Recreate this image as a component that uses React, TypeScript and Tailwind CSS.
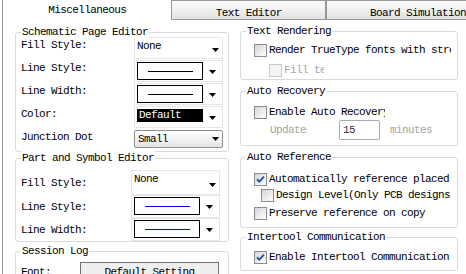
import React from 'react';

const Arrow = () => (
  <svg width="7" height="4" viewBox="0 0 7 4">
    <polygon points="0,0 7,0 3.5,4" fill="#000" />
  </svg>
);

const Check = () => (
  <svg width="11" height="11" viewBox="0 0 11 11">
    <path d="M2 5.2 L4.3 7.6 L9 2.6" fill="none" stroke="#2a52be" strokeWidth="2" />
  </svg>
);

function Group({ title, className, children }: { title: string; className?: string; children?: React.ReactNode }) {
  return (
    <div className={`relative border border-[#d3dbe3] rounded-[3px] ${className ?? ''}`}>
      <span className="absolute left-[5px] top-[-8px] bg-white px-[1px] leading-[14px] whitespace-nowrap">{title}</span>
      {children}
    </div>
  );
}

function CheckRow({ label, checked, disabled, className }: { label: string; checked?: boolean; disabled?: boolean; className?: string }) {
  return (
    <div className={`flex items-center h-[16px] gap-[2px] overflow-hidden whitespace-nowrap ${className ?? ''}`}>
      <div
        className={`w-[13px] h-[13px] shrink-0 border flex items-center justify-center ${
          disabled ? 'border-[#c9c9c9] bg-[#f4f4f4]' : 'border-[#8c8c8c] bg-linear-to-br from-[#d6d6d6] to-white'
        }`}
      >
        {checked && <Check />}
      </div>
      <span className={disabled ? 'text-[#a3a3a3]' : ''}>{label}</span>
    </div>
  );
}

function LinePreview({ color }: { color: string }) {
  return (
    <div className="ml-[2px] my-[1px] w-[66px] h-[18px] border border-black bg-white flex items-center justify-center">
      <div className={`w-[45px] h-px ${color}`} />
    </div>
  );
}

export default function App() {
  return (
    <div className="w-[466px] h-[274px] overflow-hidden bg-white flex flex-col text-[11px] tracking-[-0.6px] text-black font-['Liberation_Mono',monospace]">
      {/* tabs */}
      <div className="flex h-[20px] shrink-0">
        <div className="ml-[2px] w-[172px] h-[20px] border-l border-r border-[#919b9c] bg-white text-center pt-[4px] leading-[12px]">
          Miscellaneous
        </div>
        <div className="w-[155px] h-[20px] border-t border-b border-r border-[#919b9c] bg-linear-to-b from-[#fdfdfd] to-[#e2e2e2] text-center pt-[6px] leading-[12px]">
          Text Editor
        </div>
        <div className="flex-1 h-[20px] border-t border-b border-l border-[#919b9c] bg-linear-to-b from-[#fdfdfd] to-[#e2e2e2] pt-[6px] pl-[43px] leading-[12px] whitespace-nowrap">
          Board Simulation
        </div>
      </div>

      {/* body */}
      <div className="flex-1 flex ml-[2px] border-l border-[#919b9c] overflow-hidden">
        {/* left column */}
        <div className="ml-[12px] w-[214px] pt-[12px] flex flex-col shrink-0">
          <Group title="Schematic Page Editor" className="h-[124px] pt-[3px] pl-[5px]">
            <div className="flex items-start h-[23px]">
              <span className="w-[113px] pt-[3px] leading-[12px]">Fill Style:</span>
              <div className="mt-[1px] w-[89px] h-[22px] border border-[#e6e6e6] flex">
                <span className="flex-1 pl-[2px] pt-[2px] leading-[12px]">None</span>
                <div className="w-[14px] flex items-center justify-center pt-[3px]"><Arrow /></div>
              </div>
            </div>
            <div className="flex items-start h-[23px]">
              <span className="w-[113px] pt-[3px] leading-[12px]">Line Style:</span>
              <div className="mt-[1px] w-[89px] h-[22px] border border-[#e6e6e6] flex">
                <LinePreview color="bg-black" />
                <div className="flex-1 flex items-center justify-center pt-[2px]"><Arrow /></div>
              </div>
            </div>
            <div className="flex items-start h-[23px]">
              <span className="w-[113px] pt-[3px] leading-[12px]">Line Width:</span>
              <div className="mt-[1px] w-[89px] h-[22px] border border-[#e6e6e6] flex">
                <LinePreview color="bg-black" />
                <div className="flex-1 flex items-center justify-center pt-[2px]"><Arrow /></div>
              </div>
            </div>
            <div className="flex items-start h-[23px]">
              <span className="w-[113px] pt-[3px] leading-[12px]">Color:</span>
              <div className="mt-[1px] w-[89px] h-[22px] border border-[#e6e6e6] flex">
                <div className="ml-[2px] mt-[2px] w-[66px] h-[13px] bg-black text-white leading-[13px] pl-[2px]">Default</div>
                <div className="flex-1 flex items-center justify-center pt-[2px]"><Arrow /></div>
              </div>
            </div>
            <div className="flex items-start h-[23px]">
              <span className="w-[113px] pt-[3px] leading-[12px]">Junction Dot</span>
              <div className="mt-[2px] w-[89px] h-[18px] border border-[#8e8f8f] rounded-[2px] bg-linear-to-b from-white to-[#e4e4e4] flex items-center">
                <span className="flex-1 pl-[3px] leading-[12px]">Small</span>
                <div className="w-[14px] flex items-center justify-center"><Arrow /></div>
              </div>
            </div>
          </Group>

          <Group title="Part and Symbol Editor" className="mt-[6px] h-[86px] pt-[11px] pl-[5px]">
            <div className="flex items-start h-[25px]">
              <span className="w-[110px] self-center leading-[12px]">Fill Style:</span>
              <div className="w-[89px] h-[25px] border border-[#e6e6e6] flex">
                <span className="flex-1 pl-[2px] pt-[2px] leading-[12px]">None</span>
                <div className="w-[14px] flex items-center justify-center pt-[4px]"><Arrow /></div>
              </div>
            </div>
            <div className="flex items-center h-[23px]">
              <span className="w-[110px] leading-[12px]">Line Style:</span>
              <div className="w-[89px] h-[23px] border border-[#e6e6e6] flex">
                <LinePreview color="bg-[#0000ff]" />
                <div className="flex-1 flex items-center justify-center pt-[1px]"><Arrow /></div>
              </div>
            </div>
            <div className="flex items-center h-[23px]">
              <span className="w-[110px] leading-[12px]">Line Width:</span>
              <div className="w-[89px] h-[23px] border border-[#e6e6e6] flex">
                <LinePreview color="bg-[#0000ff]" />
                <div className="flex-1 flex items-center justify-center pt-[1px]"><Arrow /></div>
              </div>
            </div>
          </Group>

          <Group title="Session Log" className="mt-[9px] h-[60px] pt-[10px] pl-[5px]">
            <div className="flex items-start">
              <span className="w-[59px] pt-[4px] leading-[12px]">Font:</span>
              <div className="w-[139px] h-[21px] border border-[#707070] bg-[#efefef] text-center pt-[3px] leading-[12px]">
                Default Setting
              </div>
            </div>
          </Group>
        </div>

        {/* right column */}
        <div className="ml-[11px] w-[218px] pt-[11px] flex flex-col shrink-0">
          <Group title="Text Rendering" className="h-[49px] pt-[10px] pl-[13px]">
            <CheckRow label="Render TrueType fonts with stroke" className="w-[197px]" />
            <CheckRow label="Fill text" disabled className="mt-[4px] ml-[15px] w-[55px]" />
          </Group>

          <Group title="Auto Recovery" className="mt-[11px] h-[55px] pt-[12px] pl-[13px]">
            <CheckRow label="Enable Auto Recovery" className="w-[131px]" />
            <div className="flex items-center h-[20px] pl-[16px] whitespace-nowrap">
              <span className="w-[69px] text-[#a3a3a3]">Update</span>
              <div className="w-[41px] h-[20px] border border-[#a5acb5] rounded-[2px] bg-white pl-[3px] leading-[18px] text-[#333]">15</div>
              <span className="ml-[10px] text-[#a3a3a3]">minutes</span>
            </div>
          </Group>

          <Group title="Auto Reference" className="mt-[11px] h-[71px] pt-[13px] pl-[13px]">
            <CheckRow label="Automatically reference placed parts" checked className="w-[197px]" />
            <CheckRow label="Design Level(Only PCB designs)" className="ml-[7px] w-[190px]" />
            <CheckRow label="Preserve reference on copy" className="mt-[2px] w-[197px]" />
          </Group>

          <Group title="Intertool Communication" className="mt-[9px] h-[34px] pt-[11px] pl-[13px]">
            <CheckRow label="Enable Intertool Communication" checked className="w-[197px]" />
          </Group>
        </div>
      </div>
    </div>
  );
}
